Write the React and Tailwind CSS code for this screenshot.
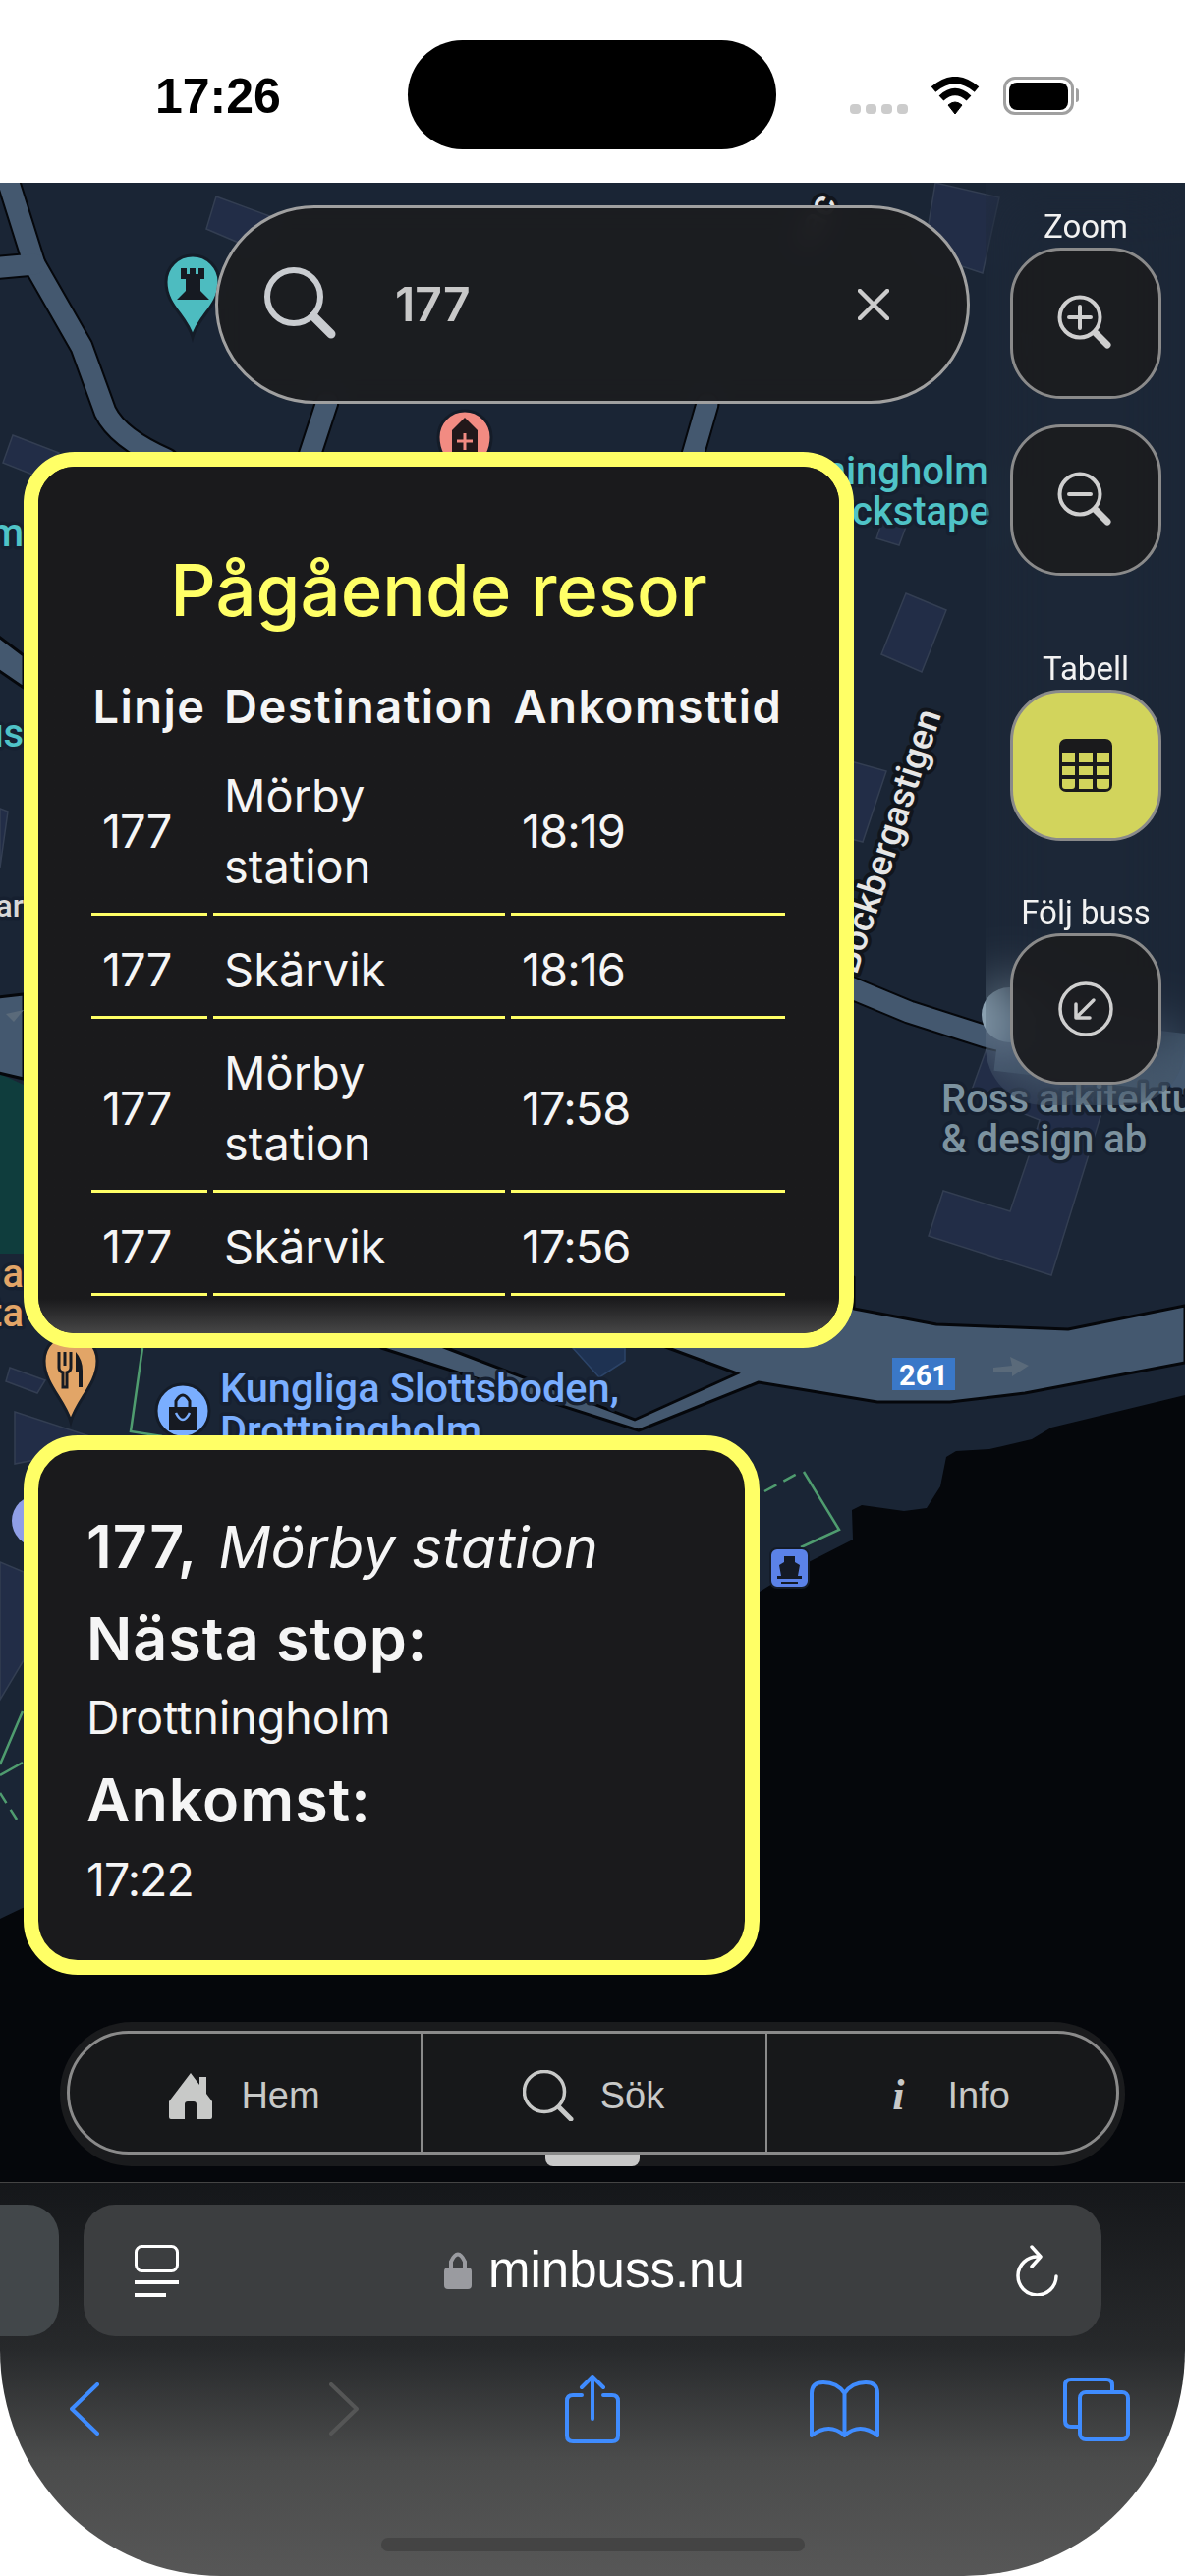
import React from 'react'

const trips = [
  { line: '177', dest: ['Mörby', 'station'], time: '18:19' },
  { line: '177', dest: ['Skärvik'], time: '18:16' },
  { line: '177', dest: ['Mörby', 'station'], time: '17:58' },
  { line: '177', dest: ['Skärvik'], time: '17:56' },
]

const Pin = ({ x, y, r, tip, fill }) => (
  <path
    d={`M${x - r} ${y} C${x - r} ${y + r * 0.9} ${x - 6} ${tip - 22} ${x} ${tip} C${x + 6} ${tip - 22} ${x + r} ${y + r * 0.9} ${x + r} ${y} A${r} ${r} 0 0 0 ${x - r} ${y}Z`}
    fill={fill}
    stroke="#141c28"
    strokeWidth="3"
  />
)

const Label = ({ x, y, fill, size = 40, children, ...rest }) => (
  <text x={x} y={y} fill={fill} fontSize={size} fontFamily="Roboto, sans-serif" fontWeight="500" stroke="#162030" strokeWidth="7" strokeLinejoin="round" paintOrder="stroke" {...rest}>
    {children}
  </text>
)

const buildings = [
  '220,200 280,222 250,250 210,233',
  '13,443 60,461 33,483 3,471',
  '952,186 1017,201 1000,278 940,258',
  '897,533 922,536 915,555 892,548',
  '922,604 963,621 938,684 897,666',
  '866,775 902,785 878,857 862,853',
  '1005,1065 988,1112 1058,1140 1047,1177 1028,1233 960,1212 945,1258 1070,1298 1122,1130 1140,1080',
  '10,1392 46,1405 38,1418 6,1406',
  '15,1437 116,1470 15,1490',
  '0,823 8,826 0,883',
  '1040,340 1050,342 1045,360',
  '0,1590 24,1600 24,1690 0,1730',
]

const MapLayer = () => (
  <svg className="absolute inset-0 h-full w-full" viewBox="0 186 1206 2035" fill="none">
    <rect x="0" y="186" width="1206" height="2035" fill="#1a2535" />
    {/* vatten */}
    <path d="M1206 1420 L1070 1453 L1050 1465 L1007 1475 L973 1477 L963 1483 L957 1513 L943 1535 L920 1538 L877 1532 L867 1537 L868 1567 L817 1593 L773 1620 L23 1942 L0 1953 L0 2221 L1206 2221Z" fill="#05070b" />
    <path d="M0 1093 L24 1104 L24 1276 L0 1276Z" fill="#0f3d3d" />

    {buildings.map((b, i) => (
      <polygon key={i} points={b} fill="#222d47" stroke="#333e52" strokeWidth="1.5" />
    ))}

    {/* vagar, svart kant under ljus fyllning */}
    <g stroke="#05070b" strokeWidth="25" strokeLinejoin="round" strokeLinecap="round">
      <path d="M7 180 L35 269 L83 353 L107 419 Q120 446 170 468" />
      <path d="M-10 273 L35 269" />
      <path d="M333 409 L313 470" />
      <path d="M720 411 L703 470" />
      <path d="M860 1003 L925 1030 L1003 1055 L1230 1110" />
    </g>
    <g stroke="#44586f" strokeWidth="21" strokeLinejoin="round" strokeLinecap="round">
      <path d="M7 180 L35 269 L83 353 L107 419 Q120 446 170 468" />
      <path d="M-10 273 L35 269" />
      <path d="M333 409 L313 470" />
      <path d="M720 411 L703 470" />
      <path d="M860 1003 L925 1030 L1003 1055 L1230 1110" />
    </g>
    <path d="M1015 1060 L1230 1085" stroke="#44586f" strokeWidth="60" />
    <path d="M-10 1016 L24 1012 L24 1098 L-10 1090Z" fill="#44586f" stroke="#05070b" strokeWidth="3" />
    <path d="M-5 645 L24 667 L24 700 L-5 680Z" fill="#44586f" stroke="#05070b" strokeWidth="3" />
    <path
      d="M869 1332 L953 1348 L1087 1353 L1206 1329 L1206 1387 L1043 1418 L967 1427 L893 1427 L772 1407 L650 1456 L388 1372 L400 1300 L869 1300Z"
      fill="#44586f"
      stroke="#05070b"
      strokeWidth="3"
      strokeLinejoin="round"
    />
    <path d="M454 1372 L646 1445 L750 1398 L680 1372 L600 1340Z" fill="#1a2535" stroke="#05070b" strokeWidth="3" />
    <polygon points="583,1372 636,1372 636,1385 610,1402" fill="#1e3252" stroke="#2c4468" strokeWidth="1.5" />

    {/* gröna gränser */}
    <g stroke="#4f9c6f" strokeWidth="2.5">
      <path d="M145 1372 L133 1457 L165 1462" />
      <path d="M818 1498 L854 1557 L815 1575" />
      <path d="M778 1518 L815 1498" strokeDasharray="14 8" />
      <path d="M23 1742 L0 1796 M0 1807 L23 1794" />
      <path d="M0 1825 L19 1855" strokeDasharray="12 8" />
    </g>

    {/* skylt och pil */}
    <rect x="908" y="1382" width="64" height="33" fill="#3a78c8" />
    <text x="940" y="1410" fill="#fff" fontSize="29" fontWeight="700" textAnchor="middle" fontFamily="Roboto, sans-serif">261</text>
    <path d="M1011 1392 L1030 1390 L1028 1381 L1047 1390 L1030 1401 L1030 1396 L1011 1397Z" fill="#5a6a7a" />
    <path d="M24 1028 L6 1032 L14 1040Z" fill="#5a6a7a" />

    {/* markörer */}
    <Pin x={196} y={287} r={27} tip={343} fill="#4dbcc0" />
    <path d="M184 273 H190 V279 H193 V273 H199 V279 H202 V273 H208 V284 H204 V296 L213 305 H180 L189 296 V284 H184Z" fill="#161a22" />
    <Pin x={473} y={445} r={27} tip={500} fill="#f28b82" />
    <path d="M473 425 L486 438 V462 H460 V438Z" fill="#22181a" />
    <path d="M473 441 V458 M465 449 H481" stroke="#f28b82" strokeWidth="3" />
    <Pin x={72} y={1385} r={27} tip={1447} fill="#e2a567" />
    <path d="M60 1376 V1392 Q60 1396 64 1397 V1412 H68 V1397 Q72 1396 72 1392 V1376 M66 1376 V1390" stroke="#161a22" strokeWidth="3" />
    <path d="M77 1376 Q84 1384 84 1395 V1412 H80 V1396 H77Z" fill="#161a22" />
    <circle cx="186" cy="1436" r="27" fill="#7aaeff" stroke="#141c28" strokeWidth="3" />
    <path d="M172 1432 H200 V1456 H172Z" fill="#161a22" />
    <path d="M179 1432 V1426 Q186 1414 193 1426 V1432" stroke="#161a22" strokeWidth="3" />
    <path d="M179 1438 Q186 1452 193 1438" stroke="#7aaeff" strokeWidth="2.5" />
    <circle cx="38" cy="1548" r="26" fill="#8f9ee6" />
    <circle cx="1027" cy="1033" r="28" fill="#8aa0b0" />
    <rect x="784" y="1576" width="39" height="40" rx="7" fill="#5b82e8" stroke="#141c28" strokeWidth="2" />
    <path d="M798 1584 H809 V1590 L814 1593 L812 1604 H816 V1607 H791 V1604 H795 L793 1593 L798 1590Z M795 1610 H812 V1612 H795Z" fill="#141a26" />

    {/* texter */}
    <Label x={1006} y={493} fill="#4fc3c7" textAnchor="end">Drottningholm</Label>
    <Label x={1008} y={534} fill="#4fc3c7" textAnchor="end">Bockstape</Label>
    <Label x={24} y={556} fill="#4fc3c7" textAnchor="end">m</Label>
    <Label x={24} y={760} fill="#4fc3c7" textAnchor="end">us</Label>
    <Label x={24} y={933} fill="#d8d8d8" textAnchor="end" size={32}>ar</Label>
    <Label x={24} y={1310} fill="#e2a567" textAnchor="end">a</Label>
    <Label x={24} y={1350} fill="#e2a567" textAnchor="end">ta</Label>
    <Label x={958} y={1132} fill="#7c929f">Ross arkitektur</Label>
    <Label x={958} y={1173} fill="#7c929f">&amp; design ab</Label>
    <Label x={224} y={1427} fill="#7aaeff" size={41.5}>Kungliga Slottsboden,</Label>
    <Label x={224} y={1470} fill="#7aaeff" size={41.5}>Drottningholm</Label>
    <text transform="rotate(-72 958 727)" x="958" y="727" textAnchor="end" fill="#e6e6e6" fontSize="37" fontWeight="500" fontFamily="Roboto, sans-serif" stroke="#11151c" strokeWidth="8" strokeLinejoin="round" paintOrder="stroke">Bockbergastigen</text>
    <text transform="rotate(-62 852 206)" x="852" y="206" textAnchor="end" fill="#e6e6e6" fontSize="37" fontWeight="500" fontFamily="Roboto, sans-serif" stroke="#11151c" strokeWidth="8" strokeLinejoin="round" paintOrder="stroke">vac</text>
  </svg>
)

const MagnifierIcon = ({ children }) => (
  <svg className="h-[60px] w-[60px]" viewBox="0 0 60 60" fill="none" stroke="#cfcfcf" strokeLinecap="round">
    <circle cx="24" cy="24" r="20.5" strokeWidth="4" />
    <path d="M40 40 L52 52" strokeWidth="7" />
    {children}
  </svg>
)

const SideButton = ({ active, children }) => (
  <div className={active
    ? 'flex h-[154px] w-[154px] items-center justify-center rounded-[52px] border-[3px] border-[#8a8a8a] bg-[#d2d45c]'
    : 'flex h-[154px] w-[154px] items-center justify-center rounded-[52px] border-[3px] border-[#8a8a8a] bg-[#1b1c20]/95'}>
    {children}
  </div>
)

const SideLabel = ({ children }) => (
  <p className="h-[41px] text-center font-['Roboto',sans-serif] text-[33px] leading-[40px] text-[#f2f2f2]">{children}</p>
)

const StatusBar = () => (
  <div className="flex h-[186px] items-start bg-white">
    <p className="ml-[158px] mt-[69px] font-['Liberation_Sans',sans-serif] text-[50px] font-bold leading-[58px] text-black">17:26</p>
    <div className="ml-[129px] mt-[41px] h-[111px] w-[375px] rounded-[56px] bg-black" />
    <div className="ml-[75px] mt-[106px] flex gap-[5px]">
      <span className="h-[10px] w-[11px] rounded-[4px] bg-[#cccccc]" />
      <span className="h-[10px] w-[11px] rounded-[4px] bg-[#cccccc]" />
      <span className="h-[10px] w-[11px] rounded-[4px] bg-[#cccccc]" />
      <span className="h-[10px] w-[11px] rounded-[4px] bg-[#cccccc]" />
    </div>
    <svg className="ml-[23px] mt-[78px] h-[39px] w-[50px]" viewBox="0 0 50 39" fill="none" stroke="#000">
      <path d="M3 13 Q25 -6 47 13" strokeWidth="7" />
      <path d="M11 22 Q25 9 39 22" strokeWidth="7" />
      <path d="M18 29 L25 38 L32 29 Q25 23 18 29Z" fill="#000" strokeWidth="1" />
    </svg>
    <div className="ml-[24px] mt-[78px] flex h-[39px] w-[72px] items-center justify-center rounded-[12px] border-[3px] border-[#a0a0a0]">
      <div className="h-[28px] w-[60px] rounded-[8px] bg-black" />
    </div>
    <div className="ml-[2px] mt-[90px] h-[14px] w-[3px] rounded-r-[3px] bg-[#a0a0a0]" />
  </div>
)

const SearchBar = () => (
  <div className="ml-[219px] flex h-[202px] w-[768px] items-center rounded-[101px] border-[3px] border-[#a0a0a0] bg-[#1b1c20]/95 backdrop-blur-md">
    <svg className="ml-[45px] h-[80px] w-[75px]" viewBox="0 0 75 80" fill="none" stroke="#c9ccd0" strokeLinecap="round">
      <circle cx="32" cy="32" r="27" strokeWidth="6" />
      <path d="M52 52 L70 70" strokeWidth="9" />
    </svg>
    <p className="ml-[60px] w-[80px] font-['Inter',sans-serif] text-[48px] font-semibold leading-[60px] text-[#c8c8c8]">177</p>
    <svg className="ml-[391px] h-[32px] w-[32px]" viewBox="0 0 32 32" fill="none" stroke="#cccccc" strokeWidth="4.5" strokeLinecap="round">
      <path d="M2 2 L30 30 M30 2 L2 30" />
    </svg>
  </div>
)

const TripsCard = () => (
  <div className="ml-[24px] mt-[49px] h-[912px] w-[845px] rounded-[52px] border-[15px] border-[#ffff66] bg-[#1a1a1c]">
    <div className="h-full rounded-[37px] bg-linear-to-b from-[#1a1a1c] from-[96%] to-[#474747] pl-[48px] pt-[84px]">
      <h1 className="-ml-[48px] text-center font-['Inter',sans-serif] text-[72.5px] font-medium leading-[84px] text-[#ffff66]">Pågående resor</h1>
      <table className="mt-[48px] w-[718px] table-fixed border-separate border-spacing-x-[6px] border-spacing-y-0 font-['Inter',sans-serif] text-[#f5f5f5]">
        <thead>
          <tr>
            <th className="w-[118px] pb-[8px] text-[47px] font-semibold leading-[56px] tracking-[1.5px]">Linje</th>
            <th className="w-[297px] pb-[8px] text-[47px] font-semibold leading-[56px] tracking-[1.5px]">Destination</th>
            <th className="w-[279px] pb-[8px] text-[47px] font-semibold leading-[56px] tracking-[1.5px]">Ankomsttid</th>
          </tr>
        </thead>
        <tbody>
          {trips.map((trip, i) => (
            <tr key={i}>
              <td className="border-b-[3px] border-[#ffff66] px-[11px] pb-[11px] pt-[19px] text-[47px] leading-[72px] tracking-[-1px]">{trip.line}</td>
              <td className="border-b-[3px] border-[#ffff66] px-[11px] pb-[11px] pt-[19px] text-[47px] leading-[72px]">
                {trip.dest.map((word) => <div key={word}>{word}</div>)}
              </td>
              <td className="border-b-[3px] border-[#ffff66] px-[11px] pb-[11px] pt-[19px] text-[47px] leading-[72px] tracking-[-1px]">{trip.time}</td>
            </tr>
          ))}
        </tbody>
      </table>
    </div>
  </div>
)

const BusCard = () => (
  <div className="ml-[24px] mt-[89px] h-[549px] w-[749px] rounded-[55px] border-[15px] border-[#ffff66] bg-[#1a1a1c] pl-[49px] pt-[62px] font-['Inter',sans-serif] text-[#f5f5f5]">
    <p className="text-[61px] leading-[72px]"><span className="font-semibold tracking-[1px]">177,</span> <em className="ml-[4px] text-[59px] font-normal">Mörby station</em></p>
    <p className="mt-[21px] text-[61px] font-semibold leading-[72px] tracking-[1px]">Nästa stop:</p>
    <p className="mt-[16px] text-[46.5px] leading-[56px]">Drottningholm</p>
    <p className="mt-[20px] text-[61px] font-semibold leading-[72px] tracking-[1px]">Ankomst:</p>
    <p className="mt-[17px] text-[46.5px] leading-[56px] tracking-[-1px]">17:22</p>
  </div>
)

const SidePanel = () => (
  <div className="flex h-[939px] w-[203px] flex-col items-center rounded-b-[60px] bg-white/[0.01] pl-[1px] pt-[25px] backdrop-blur-[30px]">
    <SideLabel>Zoom</SideLabel>
    <SideButton>
      <MagnifierIcon><path d="M24 13 V35 M13 24 H35" strokeWidth="4" /></MagnifierIcon>
    </SideButton>
    <div className="mt-[26px]">
      <SideButton>
        <MagnifierIcon><path d="M13 24 H35" strokeWidth="4" /></MagnifierIcon>
      </SideButton>
    </div>
    <div className="mt-[75px]"><SideLabel>Tabell</SideLabel></div>
    <SideButton active>
      <svg className="h-[54px] w-[54px]" viewBox="0 0 54 54">
        <rect width="54" height="54" rx="7" fill="#1a1a1c" />
        <path d="M3 14 H16 V24 H3Z M20 14 H34 V24 H20Z M38 14 H51 V24 H38Z M3 28 H16 V37 H3Z M20 28 H34 V37 H20Z M38 28 H51 V37 H38Z M3 41 H16 V48 Q16 51 13 51 H6 Q3 51 3 48Z M20 41 H34 V51 H20Z M38 41 H51 V48 Q51 51 48 51 H41 Q38 51 38 48Z" fill="#d2d45c" />
      </svg>
    </SideButton>
    <div className="mt-[53px]"><SideLabel>Följ buss</SideLabel></div>
    <SideButton>
      <svg className="h-[56px] w-[56px]" viewBox="0 0 56 56" fill="none" stroke="#cfcfcf" strokeWidth="3.5" strokeLinecap="round" strokeLinejoin="round">
        <circle cx="28" cy="28" r="26" />
        <path d="M36 19 L19 36 M18 23 V37 H32" />
      </svg>
    </SideButton>
  </div>
)

const BottomNav = () => (
  <div className="mx-[61px] mt-[48px] flex h-[147px] flex-col items-center rounded-[73px] bg-[#1a1b1d] pt-[9px] font-['Liberation_Sans',sans-serif] text-[38px] text-[#c8c9c8]">
    <div className="mx-auto flex h-[126px] w-[1071px] shrink-0 rounded-[63px] border-[3px] border-[#8a8a8a] bg-[#17181a]">
      <div className="flex w-[357px] items-center justify-center gap-[29px] pt-[6px]">
        <svg className="h-[47px] w-[44px]" viewBox="0 0 44 47" fill="#c8c9c8">
          <path d="M22 0 L31 12 V4 H38 V21 L44 29 V45 Q44 47 42 47 H28 V32 Q28 29 25 29 H19 Q16 29 16 32 V47 H2 Q0 47 0 45 V29Z" />
        </svg>
        <span>Hem</span>
      </div>
      <div className="flex w-[353px] items-center justify-center gap-[26px] border-x-[2px] border-[#8a8a8a] pt-[6px]">
        <svg className="h-[52px] w-[53px]" viewBox="0 0 53 52" fill="none" stroke="#c8c9c8" strokeLinecap="round">
          <circle cx="22" cy="22" r="20.5" strokeWidth="3.5" />
          <path d="M37 38 L49 50" strokeWidth="5" />
        </svg>
        <span>Sök</span>
      </div>
      <div className="flex flex-1 items-center justify-center gap-[44px] pl-[20px] pt-[6px]">
        <span className="font-['Liberation_Serif',serif] text-[44px] font-bold italic">i</span>
        <span>Info</span>
      </div>
    </div>
    <div className="h-[12px] w-[96px] rounded-b-[8px] bg-[#c8c8c8]" />
  </div>
)

const SafariBar = () => (
  <div className="h-[401px] rounded-b-[225px_230px] border-t border-[#444444] bg-[linear-gradient(to_bottom,#15171a_0%,#27292b_42%,#4a4b4b_70%,#575757_100%)] pt-[22px]">
    <div className="flex h-[134px] gap-[25px]">
      <div className="w-[60px] rounded-r-[32px] bg-[#42474a]" />
      <div className="flex w-[1036px] items-center rounded-[32px] bg-[#3c3e40]">
        <svg className="ml-[52px] h-[53px] w-[45px]" viewBox="0 0 45 53" fill="none" stroke="#fff">
          <rect x="1.5" y="1.5" width="42" height="25" rx="6" strokeWidth="3" />
          <path d="M0 38 H45" strokeWidth="4" />
          <path d="M0 51 H32" strokeWidth="4" />
        </svg>
        <svg className="ml-[270px] h-[38px] w-[28px]" viewBox="0 0 28 38" fill="none">
          <path d="M7 18 V10 Q14 -5 21 10 V18" stroke="#9a9ba0" strokeWidth="4" />
          <rect y="16" width="28" height="22" rx="4" fill="#9a9ba0" />
        </svg>
        <span className="ml-[17px] font-['Liberation_Sans',sans-serif] text-[51px] leading-[60px] text-white">minbuss.nu</span>
        <svg className="ml-[276px] h-[52px] w-[43px]" viewBox="0 0 43 52" fill="none" stroke="#fff" strokeWidth="3.5" strokeLinecap="round" strokeLinejoin="round">
          <path d="M22 12 A19.5 19.5 0 1 0 41 32" />
          <path d="M16 2 L25 12 L16 22" />
        </svg>
      </div>
    </div>
    <div className="mt-[39px] flex h-[70px] items-center">
      <svg className="ml-[71px] h-[54px] w-[30px]" viewBox="0 0 30 54" fill="none" stroke="#3f8cff" strokeWidth="4" strokeLinecap="round" strokeLinejoin="round">
        <path d="M28 2 L2 27 L28 52" />
      </svg>
      <svg className="ml-[234px] h-[54px] w-[30px]" viewBox="0 0 30 54" fill="none" stroke="#555656" strokeWidth="4" strokeLinecap="round" strokeLinejoin="round">
        <path d="M2 2 L28 27 L2 52" />
      </svg>
      <svg className="ml-[210px] h-[70px] w-[56px]" viewBox="0 0 56 70" fill="none" stroke="#3f8cff" strokeWidth="4" strokeLinecap="round" strokeLinejoin="round">
        <path d="M17 21 H8 Q2 21 2 27 V62 Q2 68 8 68 H48 Q54 68 54 62 V27 Q54 21 48 21 H39" />
        <path d="M28 45 V2 M17 13 L28 2 L39 13" />
      </svg>
      <svg className="ml-[193px] h-[58px] w-[71px]" viewBox="0 0 71 58" fill="none" stroke="#3f8cff" strokeWidth="4" strokeLinecap="round" strokeLinejoin="round">
        <path d="M35.5 13 Q28 2 14 2 Q2 2 2 13 V56 Q20 42 35.5 56 Q51 42 69 56 V13 Q69 2 57 2 Q43 2 35.5 13 V56" />
      </svg>
      <svg className="ml-[187px] h-[65px] w-[68px]" viewBox="0 0 68 65" fill="none" stroke="#3f8cff" strokeWidth="4" strokeLinejoin="round">
        <path d="M15 50 H8 Q2 50 2 44 V8 Q2 2 8 2 H44 Q50 2 50 8 V15" />
        <rect x="17" y="15" width="49" height="48" rx="6" />
      </svg>
    </div>
    <div className="mx-auto mt-[96px] h-[14px] w-[431px] rounded-[7px] bg-[#444444]" />
  </div>
)

const App = () => {
  return (
    <div className="h-[2622px] w-[1206px] overflow-hidden bg-white">
      <StatusBar />
      <div className="relative h-[2035px] overflow-hidden">
        <MapLayer />
        <div className="relative flex">
          <div className="w-[1003px] pt-[23px]">
            <SearchBar />
            <TripsCard />
            <BusCard />
          </div>
          <SidePanel />
        </div>
        <div className="relative">
          <BottomNav />
        </div>
      </div>
      <SafariBar />
    </div>
  )
}

export default App
